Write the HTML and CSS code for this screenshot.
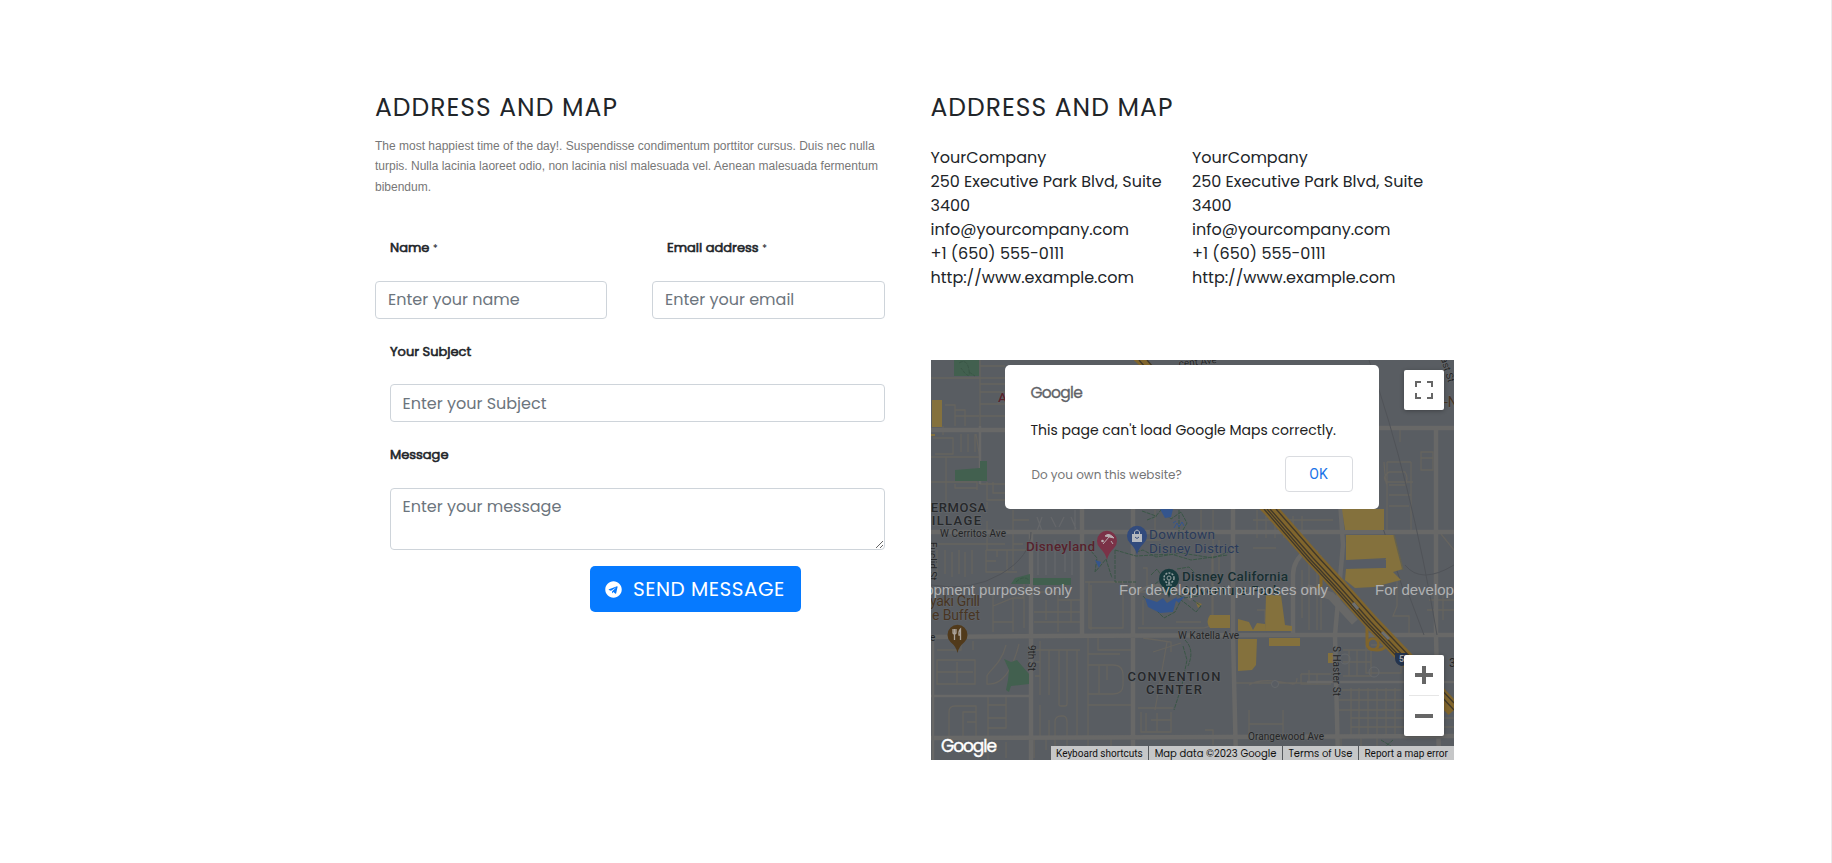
FILE: index.html
```html
<!DOCTYPE html>
<html lang="en">
<head>
<meta charset="utf-8">
<title>Contact</title>
<link rel="stylesheet" href="styles.css">
</head>
<body>
<main class="contact">
  <section class="form-col">
    <h2 class="title">ADDRESS AND MAP</h2>
    <p class="intro">The most happiest time of the day!. Suspendisse condimentum porttitor cursus. Duis nec nulla turpis. Nulla lacinia laoreet odio, non lacinia nisl malesuada vel. Aenean malesuada fermentum bibendum.</p>
    <form class="form">
      <div class="pair">
        <div class="field"><label class="label" for="name">Name <span class="req">*</span></label><input class="control" id="name" type="text" placeholder="Enter your name"></div>
        <div class="field"><label class="label" for="email">Email address <span class="req">*</span></label><input class="control" id="email" type="email" placeholder="Enter your email"></div>
      </div>
      <div class="field inset"><label class="label" for="subject">Your Subject</label><input class="control" id="subject" type="text" placeholder="Enter your Subject"></div>
      <div class="field inset"><label class="label" for="message">Message</label><textarea class="control area" id="message" rows="2" placeholder="Enter your message"></textarea></div>
      <button class="send" type="button">
        <svg class="send-icon" viewBox="0 0 496 512"><path fill="#fff" d="M248 8C111 8 0 119 0 256s111 248 248 248 248-111 248-248S385 8 248 8zm122 170-41 192c-3 14-11 17-22 11l-62-46-30 29c-3 3-6 6-13 6l5-63 115-104c5-5-1-7-8-3L172 290l-61-19c-13-4-14-13 3-20l239-92c11-4 21 3 17 19z"/></svg>
        <span>SEND MESSAGE</span>
      </button>
    </form>
  </section>

  <section class="map-col">
    <h2 class="title">ADDRESS AND MAP</h2>
    <div class="addresses">
      <address class="address">YourCompany<br>250 Executive Park Blvd, Suite 3400<br>info@yourcompany.com<br>+1 (650) 555-0111<br>http://www.example.com</address>
      <address class="address">YourCompany<br>250 Executive Park Blvd, Suite 3400<br>info@yourcompany.com<br>+1 (650) 555-0111<br>http://www.example.com</address>
    </div>
    <div class="map">
      <svg class="map-canvas" width="523" height="400" viewBox="0 0 523 400">
        <rect width="523" height="400" fill="#595d62"/>
        <!-- side streets -->
        <g fill="none" stroke="#66645f" stroke-width="1.3">
          <path d="M0 18H74M49 0V124M49 24H74M49 32H74M49 44H74M49 56H74M49 6H74M14 45H24V66M24 50H34V66M24 56H48M12 66V75M2 78H22V94H4M30 74V92M37 74V92M44 74V92M0 97H50M15 97V150M56 122V140H74M62 122V133H74M49 124H74M45 74L50 105M0 122H46V130M46 128H24V124"/>
          <path d="M56 142V149M56 161V190M82 150V172M82 160H98M0 184H74M82 172V210M55 190H76V212H55V190M55 201H65M76 190H98M82 184H92M76 212H86M66 190V197M6 190V217M14 190V214M21 192V217M28 190V214M34 192V217M41 190V214"/>
          <path stroke="#65676a" d="M106 157l5 14M111 157l-5 14M120 157l5 10M133 157l-5 10M140 157l5 12M107 185V215M115 188V215M124 180V215M134 188V212M141 188V215M144 150V172"/>
          <path d="M55 228H62V246L82 238H92V232M62 246V272M82 238V272M62 262H82M103 232H127V240H151M127 232V272M115 240V260M140 240V262M103 252H151M103 262H151M93 218V268M75 285C70 305 58 310 56 316V324C75 326 84 300 88 284M30 281V290H6M42 281V290M44 300H6V324H44ZM6 312H42M26 302V323"/>
          <path d="M104 290H149M109 281V335M118 290V335M128 290V345Q128 346 130 346H134Q136 346 136 344V290M146 290V378M104 302H109M104 316H109M157 294H189M157 278V388M167 278V290H202M157 305H182Q192 305 192 315V325Q192 334 182 334H157M157 345H200M168 306V333M176 306V320M57 335V378M57 345H75M57 358H75M75 335V368H57M18 376V352Q18 346 24 346H45V376M32 376V352H45M36 362H45M124 376V362Q124 356 130 356H132Q136 356 136 362V376M109 345V378M118 360V378M103 378V398M115 378V390M57 378V400M32 378V394M45 378V390M75 382V398M124 378V390M136 378V398M180 378V390"/>
          <path d="M154 222H192V268H158V222M160 225V270M207 180H230M212 208H216V232H207M212 240V265M224 150V178M270 150V178M281 186V262M207 268H270Q282 268 282 258V150M288 180V230H270M245 262H270M212 278L240 282V292M222 292L250 283M236 282L224 350M207 348H242M210 352V372H240V352M215 353V371M220 360H240M226 353V371M282 385V370H274M303 323H380M378 323V310M318 325Q330 317 362 324Q366 324 366 318M318 350V376M352 350V376M318 364H352"/>
          <path d="M322 160H402M326 150V178M335 156V178M344 156V178M353 156V178M362 156V178M371 156V178M322 172H395M322 188H345M386 190V270M378 200V270M371 210V258M390 195V270M326 250H334V262"/>
          <path d="M412 290H440V316H412M418 290V316M426 290V316M412 302H440M440 285H470V313H435V285M408 330H470M408 340H523M408 350H523M420 328V376M428 328V376M437 328V376M446 328V376M455 328V376M464 328V376M420 358H523M420 367H523M370 314V324H400M370 314H400M386 314V324M484 328V376M494 340V376M410 378V400M430 378V400M446 378V398"/>
          <path d="M453 102Q455 130 456 122H482M456 102V170M480 102V170M456 102H480M456 122Q450 118 458 112H474Q478 118 474 125H458M458 135H480M458 146H478M469 70V82M490 92H502V110H490ZM490 98H502M510 174L523 190M466 220V246L462 256H478V275M498 240H523M496 250H523M512 232V260"/>
        </g>
        <!-- arterial roads -->
        <g fill="none" stroke="#686867" stroke-width="4.5">
          <path d="M0 70H76M440 68H523M0 172H523M0 277L120 276 350 275H523M0 378L290 377 523 376M151 140V276M202 140V400M100 172V400M302 140V276L305 400M362 275V215Q362 200 376 190M409 140L412 185 404 275 407 400M505 68V275L508 400" />
          <path stroke-width="2.5" d="M2 275V400M0 336H100M49 66V124M207 232Q232 215 260 240M376 322H523"/>
          <path stroke-width="8" d="M402 222L478 302M376 228L400 236 424 262"/>
        </g>
        <path fill="none" stroke="#505358" stroke-width="1" d="M0 225Q40 232 70 214T100 172M438 0Q480 120 506 275M446 150L474 235M474 205Q490 225 523 205M476 230L493 275"/>
        <!-- parks -->
        <g fill="#42604f">
          <path d="M23 0H48V16H23ZM24 110L49 108V101H56V121H24ZM102 218H140V225H102ZM80 224L84 218 99 214V224ZM73 299L80 302 86 300 98 314V324L80 326 78 332 75 330 77 320 78 310Z"/>
        </g>
        <!-- lots -->
        <g fill="#84713d">
          <path d="M1 40H11V67H1ZM0 74H4V76H0ZM411 149H453V170H414ZM415 175H463L472 209 462 212 470 220 443 227 424 228 414 220 415 209 452 208 455 198 415 200ZM279 255H299V268H279Q274 262 279 255ZM335 235H350L354 265 361 266V271H334ZM307 259L318 262 322 270 326 263 334 264V271H307ZM307 279H326L325 305 321 310 307 311ZM338 278H369V286H338ZM397 293H402V303H397ZM265 242L271 244 267 248Z"/>
        </g>
        <path d="M415 200H455V208H415Z" fill="#575c65"/>
        <path d="M463 175L472 210" stroke="#65624f" stroke-width="1.5"/>
        <!-- freeway -->
        <g fill="none">
          <g stroke="#80652c">
            <path stroke-width="15" d="M330 140L339 149 382 198 408 226 440 262 480 304 523 350"/>
            <path stroke-width="9" d="M206 -3L224 14"/>
            <path stroke-width="3" d="M390 215V225L386 228M436 262V284Q436 290 446 290T454 282M438 262L470 288"/>
          </g>
          <circle cx="442" cy="284" r="5.5" stroke="#80652c" stroke-width="2.5"/>
          <path stroke="#41392a" stroke-width="1.3" d="M333 149L376 199 402 227 434 263 474 305M339 149L382 198 408 226 440 262 480 304 523 350M345 149L388 198 413 225 445 261 484 302 523 343M336 149L379 199 405 227 437 263 477 305M208 0L214 7M216 0L222 7"/>
          <path stroke="#6d6f70" stroke-width="3" d="M422 243L427 249M451 272L458 279"/>
        </g>
        <!-- resort footpaths and ponds -->
        <g fill="none" stroke="#3a5646" stroke-width="1" stroke-dasharray="4 1">
          <path d="M211 151L225 156 230 150 240 159 250 152 256 163 252 170M248 150V178M216 160L226 156M160 191L166 198 164 212 171 204 175 199 181 218M184 190V222H205M184 190L205 196 240 194 260 200 297 195M205 192L212 190 225 197 250 193 282 198 300 191M220 215L226 209 232 218 224 224M246 209L258 207 264 213M212 236L222 247 233 258 244 252 250 240 258 246 265 252 270 246 262 240M226 234L240 230 252 238 268 236M252 286L256 300 251 325 243 350M28 3Q36 -2 38 10T30 8M38 12L44 16"/>
          <path d="M254 280Q264 290 257 306M450 380L460 386 455 392 466 396M448 392L462 380M85 222Q92 215 98 220"/>
        </g>
        <g fill="#34558d">
          <path d="M229 149H242L240 157 234 158ZM214 238L226 242 232 238 236 243 246 237 242 252 229 253 217 247ZM244 240L254 236 248 243ZM164 200L170 202 168 208Z"/>
        </g>
        <path fill="none" stroke="#34558d" d="M243 168l3-5 2 4 3-5 2 4M242 163l3-2"/>
        <g fill="none" stroke="#65686b"><circle cx="414" cy="299" r="5"/><circle cx="443" cy="312" r="5"/><circle cx="344" cy="324" r="3.5" fill="#595d63"/></g>

        <!-- place pins -->
        <path fill="#7b3247" d="M176 200Q175 194 169 188A10 10 0 1 1 183 188Q177 194 176 200Z"/>
        <path d="M174 176Q178 172 183 178ZM178 177L172 184M180 181L182 184" fill="#b9aeb1" stroke="#b9aeb1"/><circle cx="171.500" cy="181" r="1.300" fill="#b9aeb1"/>
        <path fill="#324b7d" d="M206 195Q205 189 199 183A10 10 0 1 1 213 183Q207 189 206 195Z"/>
        <path fill="#b5b9c0" d="M201 174H211V182H201Z"/><path d="M203.500 175V172Q206 168 208.500 172V175" fill="none" stroke="#b5b9c0"/><path d="M204 177Q206 180 208 177" fill="none" stroke="#324b7d"/>
        <path fill="#173a3d" d="M238 238Q237 232 231 226A10 10 0 1 1 245 226Q239 232 238 238Z"/>
        <g fill="none" stroke="#909d9e"><circle cx="238" cy="218" r="5" stroke-dasharray="2 1.200" stroke-width="1.500"/><circle cx="238" cy="218" r="2"/><path d="M238 220V225M235 225H241"/></g>
        <path fill="#513a1b" d="M26.500 293Q25.500 287 19.500 282A10 10 0 1 1 33.500 282Q27.500 287 26.500 293Z"/>
        <path d="M22 269V273Q23.500 275 25 273V269M23.500 269V280M29.500 280V269Q27.500 271 28 275H29.500" fill="none" stroke="#aaa299" stroke-width="1.300"/>
        <path d="M464 293H476V302Q475 306 470 306 464 304 464 298Z" fill="#24344e"/>
        <text x="468" y="302" class="m-shield">5</text>

        <!-- labels -->
        <g class="m-area">
          <text x="56" y="152" textLength="66" text-anchor="end">HERMOSA</text>
          <text x="51" y="165" textLength="60" text-anchor="end">VILLAGE</text>
          <text x="196.500" y="320.500" textLength="94">CONVENTION</text>
          <text x="215" y="333.500" textLength="57">CENTER</text>
        </g>
        <g class="m-road">
          <text x="9" y="177" textLength="66">W Cerritos Ave</text>
          <text x="247" y="279" textLength="61">W Katella Ave</text>
          <text x="317" y="380" textLength="76">Orangewood Ave</text>
          <text transform="translate(97 285) rotate(90)" textLength="26">9th St</text>
          <text transform="translate(402 286) rotate(90)" textLength="50">S Haster St</text>
          <text transform="translate(508 -7) rotate(73)">East St</text>
          <text transform="translate(248 7) rotate(-6)">cent Ave</text>
          <text transform="translate(-2 182) rotate(90)">Euclid St</text>
          <text x="-1" y="281">e</text>
          <text x="518" y="307" font-size="12">3</text>
        </g>
        <text x="67" y="42" class="m-poi red">A</text>
        <text x="95" y="191" class="m-poi red" textLength="69">Disneyland</text>
        <text x="218" y="179" class="m-poi blue" textLength="66">Downtown</text>
        <text x="218" y="193" class="m-poi blue" textLength="90">Disney District</text>
        <text x="251" y="221" class="m-poi green" textLength="106">Disney California</text>
        <text x="251" y="235" class="m-poi green" textLength="98">Adventure Park</text>
        <text x="-1" y="246" class="m-poi brown" textLength="50">yaki Grill</text>
        <text x="1" y="260" class="m-poi brown" textLength="48">e Buffet</text>
        <text x="513" y="47" class="m-poi brown">-N</text>

        <g class="m-dev">
          <text x="-68" y="235" textLength="209">For development purposes only</text>
          <text x="188" y="235" textLength="209">For development purposes only</text>
          <text x="444" y="235" textLength="209">For development purposes only</text>
        </g>
        <text x="10" y="392" class="m-logo" textLength="56">Google</text>
      </svg>

      <div class="dialog">
        <div class="dialog-logo">Google</div>
        <div class="dialog-text">This page can't load Google Maps correctly.</div>
        <div class="dialog-foot"><span class="dialog-link">Do you own this website?</span><button class="ok" type="button">OK</button></div>
      </div>

      <div class="fullscreen"><svg width="18" height="18" viewBox="0 0 18 18"><path fill="#666" d="M0 0v6h2V2h4V0H0zm16 0h-4v2h4v4h2V0h-2zm0 16h-4v2h6v-6h-2v4zM2 12H0v6h6v-2H2v-4z"/></svg></div>
      <div class="zoom">
        <div class="zoom-btn"><svg width="18" height="18" viewBox="0 0 18 18"><path fill="#666" d="M18 7h-7V0H7v7H0v4h7v7h4v-7h7z"/></svg></div>
        <div class="zoom-line"></div>
        <div class="zoom-btn"><svg width="18" height="18" viewBox="0 0 18 18"><path fill="#666" d="M0 7h18v4H0z"/></svg></div>
      </div>
      <div class="credits">
        <span class="credit roboto">Keyboard shortcuts</span><span class="credit">Map data ©2023 Google</span><span class="credit">Terms of Use</span><span class="credit roboto">Report a map error</span>
      </div>
    </div>
  </section>
</main>
</body>
</html>
```

FILE: styles.css
```css
* { box-sizing: border-box; }
body {
  margin: 0;
  height: 863px;
  overflow: hidden;
  background: #fff;
  border-right: 1px solid #ececec;
  color: #212529;
  font: 400 16px/24px Poppins, Inter, sans-serif;
}
.contact {
  display: grid;
  grid-template-columns: 510px 523.5px;
  column-gap: 45.5px;
  padding: 91px 0 0 375px;
}
.title {
  margin: 0;
  font-size: 25px;
  line-height: 33px;
  font-weight: 400;
  letter-spacing: 1px;
}
.intro {
  margin: 12px 0 0;
  color: #777;
  font: 12px/20.4px "Liberation Sans", Arial, sans-serif;
}
.form { display: flex; flex-direction: column; padding-top: 41px; }
.pair { display: grid; grid-template-columns: 232px 233px; justify-content: space-between; }
.field { display: flex; flex-direction: column; }
.inset { margin: 22.5px 0 0 15px; }
.label {
  height: 43px;
  font-size: 13px;
  line-height: 20px;
  font-weight: 400;
  -webkit-text-stroke: .6px #212529;
}
.inset .label { height: 42.5px; }
.pair .label { padding-left: 15px; }
.req { font-size: 10.5px; -webkit-text-stroke: 0; }
.control {
  width: 100%;
  height: 38px;
  padding: 5px 12px 7px;
  border: 1px solid #ced4da;
  border-radius: 4px;
  background: #fff;
  color: #495057;
  font: inherit;
}
.inset .control { padding: 6px 11.5px; }
.control::placeholder { color: #6c757d; opacity: 1; }
.inset .area { height: 62px; margin-top: .5px; resize: vertical; }
.send {
  display: flex;
  align-items: center;
  gap: 11px;
  width: 211px;
  height: 46px;
  margin: 16.5px 0 0 215px;
  padding: 0 0 0 15px;
  border: 0;
  border-radius: 5px;
  background: #067aff;
  color: #fff;
  font: 400 20px/30px Poppins, Inter, sans-serif;
  letter-spacing: .5px;
  white-space: nowrap;
}
.send-icon { width: 17px; height: 17px; flex: none; }

.addresses { display: grid; grid-template-columns: 261.5px 262px; padding-top: 22px; }
.address { padding-right: 25px; font-style: normal; }
.map { position: relative; width: 523px; height: 400px; margin: 70px 0 0 .5px; overflow: hidden; }
.map-canvas { display: block; font-family: Roboto, sans-serif; }
.m-area { font-size: 13px; font-weight: 500; letter-spacing: 1px; fill: #26282a; stroke: #62666a; stroke-width: 1.5px; paint-order: stroke; }
.m-road { font-size: 10px; fill: #242526; stroke: #65686b; stroke-width: 1px; paint-order: stroke; }
.m-poi { font-size: 13.5px; font-weight: 500; stroke: #62666b; stroke-width: 1px; paint-order: stroke; }
.m-poi.red { fill: #57222c; }
.m-poi.blue { fill: #2a3a59; font-weight: 400; }
.m-poi.green { fill: #172f31; }
.m-poi.brown { fill: #483523; font-size: 14px; font-weight: 400; }
.m-shield { font-size: 9px; font-weight: 700; fill: #a5a9ae; }
.m-dev { font: 15px "Liberation Sans", Arial, sans-serif; fill: #b0b1b2; }
.m-logo { font: 400 17px Poppins, Inter, sans-serif; fill: #fff; stroke: #fff; stroke-width: .4px; }

.dialog {
  position: absolute;
  left: 74px;
  top: 5px;
  width: 374px;
  height: 144px;
  padding: 16px 26.5px 0 25.5px;
  border-radius: 5px;
  background: #fff;
}
.dialog-logo { color: #5f6368; font-size: 15.5px; letter-spacing: -.7px; -webkit-text-stroke: .3px #5f6368; }
.dialog-text { padding-top: 13px; font-size: 14px; line-height: 24px; color: #212121; white-space: nowrap; }
.dialog-foot { display: flex; align-items: center; justify-content: space-between; padding-top: 14px; }
.dialog-link { padding: 1px 0 0 1px; font-size: 12px; color: #757575; }
.ok { width: 68px; height: 36px; border: 1px solid #dadce0; border-radius: 4px; background: #fff; color: #1a73e8; font: 14px Roboto, sans-serif; }
.fullscreen, .zoom { position: absolute; right: 10px; width: 40px; background: #fff; border-radius: 2px; box-shadow: 0 1px 4px rgba(0,0,0,.3); }
.fullscreen { top: 10px; height: 40px; display: grid; place-items: center; }
.zoom { top: 295px; height: 81px; }
.zoom-btn { height: 40px; display: grid; place-items: center; }
.zoom-line { height: 1px; margin: 0 5px; background: #e6e6e6; }
.credits { position: absolute; right: 0; bottom: 0; display: flex; width: 403px; height: 14px; background: #c6c7c8; color: #111; font-size: 10px; line-height: 15px; white-space: nowrap; }
.credit { padding: 0 5.3px 0 5.7px; border-left: 1px solid #55585c; }
.credit:first-child { border: 0; padding-left: 5px; }
.roboto { font-family: Roboto, sans-serif; }
```
